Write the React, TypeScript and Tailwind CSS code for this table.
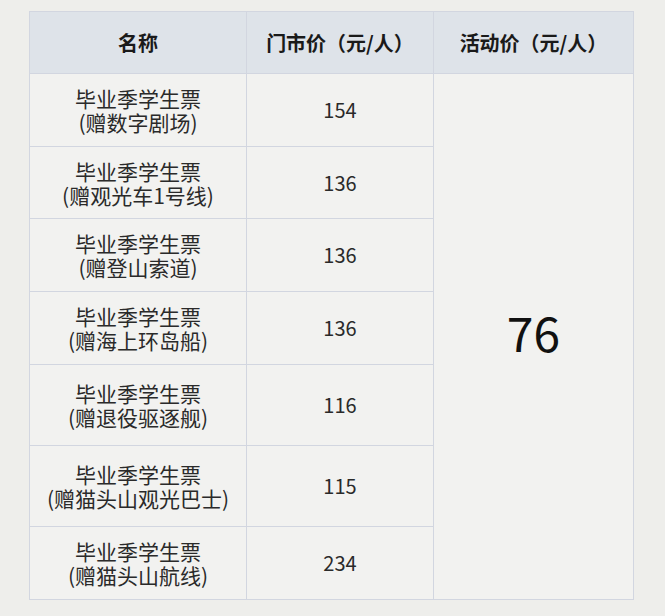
const rows = [
  { sub: "(赠数字剧场)", price: 154, h: "h-[73px]" },
  { sub: "(赠观光车1号线)", price: 136, h: "h-[72px]" },
  { sub: "(赠登山索道)", price: 136, h: "h-[73px]" },
  { sub: "(赠海上环岛船)", price: 136, h: "h-[73px]" },
  { sub: "(赠退役驱逐舰)", price: 116, h: "h-[81px]" },
  { sub: "(赠猫头山观光巴士)", price: 115, h: "h-[81px]" },
  { sub: "(赠猫头山航线)", price: 234, h: "h-[73px]" },
];

export default function App() {
  return (
    <div
      className="min-h-[616px] w-full bg-[#eeeeeb] pt-[11px] pl-[29px] text-[#222]"
      style={{ fontFamily: '"Noto Sans CJK SC", "Noto Sans", sans-serif' }}
    >
      <table className="w-[604px] border-collapse table-fixed">
        <colgroup>
          <col className="w-[217px]" />
          <col className="w-[187px]" />
          <col className="w-[200px]" />
        </colgroup>
        <thead>
          <tr className="h-[62px] bg-[#dee3e9]">
            <th className="border border-[#d2d6e0] text-[20px] font-bold text-[#1a1a1a]">名称</th>
            <th className="border border-[#d2d6e0] text-[20px] font-bold text-[#1a1a1a]">门市价（元/人）</th>
            <th className="border border-[#d2d6e0] text-[20px] font-bold text-[#1a1a1a]">活动价（元/人）</th>
          </tr>
        </thead>
        <tbody className="bg-[#f5f5f3]/60">
          {rows.map((r, i) => (
            <tr key={i} className={r.h}>
              <td className="border border-[#d2d6e0] text-center text-[21px] leading-[24px] text-[#2a2a2a]">
                <div>毕业季学生票</div>
                <div>{r.sub}</div>
              </td>
              <td className="border border-[#d2d6e0] text-center text-[20px] text-[#2a2a2a]">
                {r.price}
              </td>
              {i === 0 && (
                <td
                  rowSpan={rows.length}
                  className="border border-[#d2d6e0] pb-[12px] text-center text-[48px] text-[#111]"
                >
                  76
                </td>
              )}
            </tr>
          ))}
        </tbody>
      </table>
    </div>
  );
}
